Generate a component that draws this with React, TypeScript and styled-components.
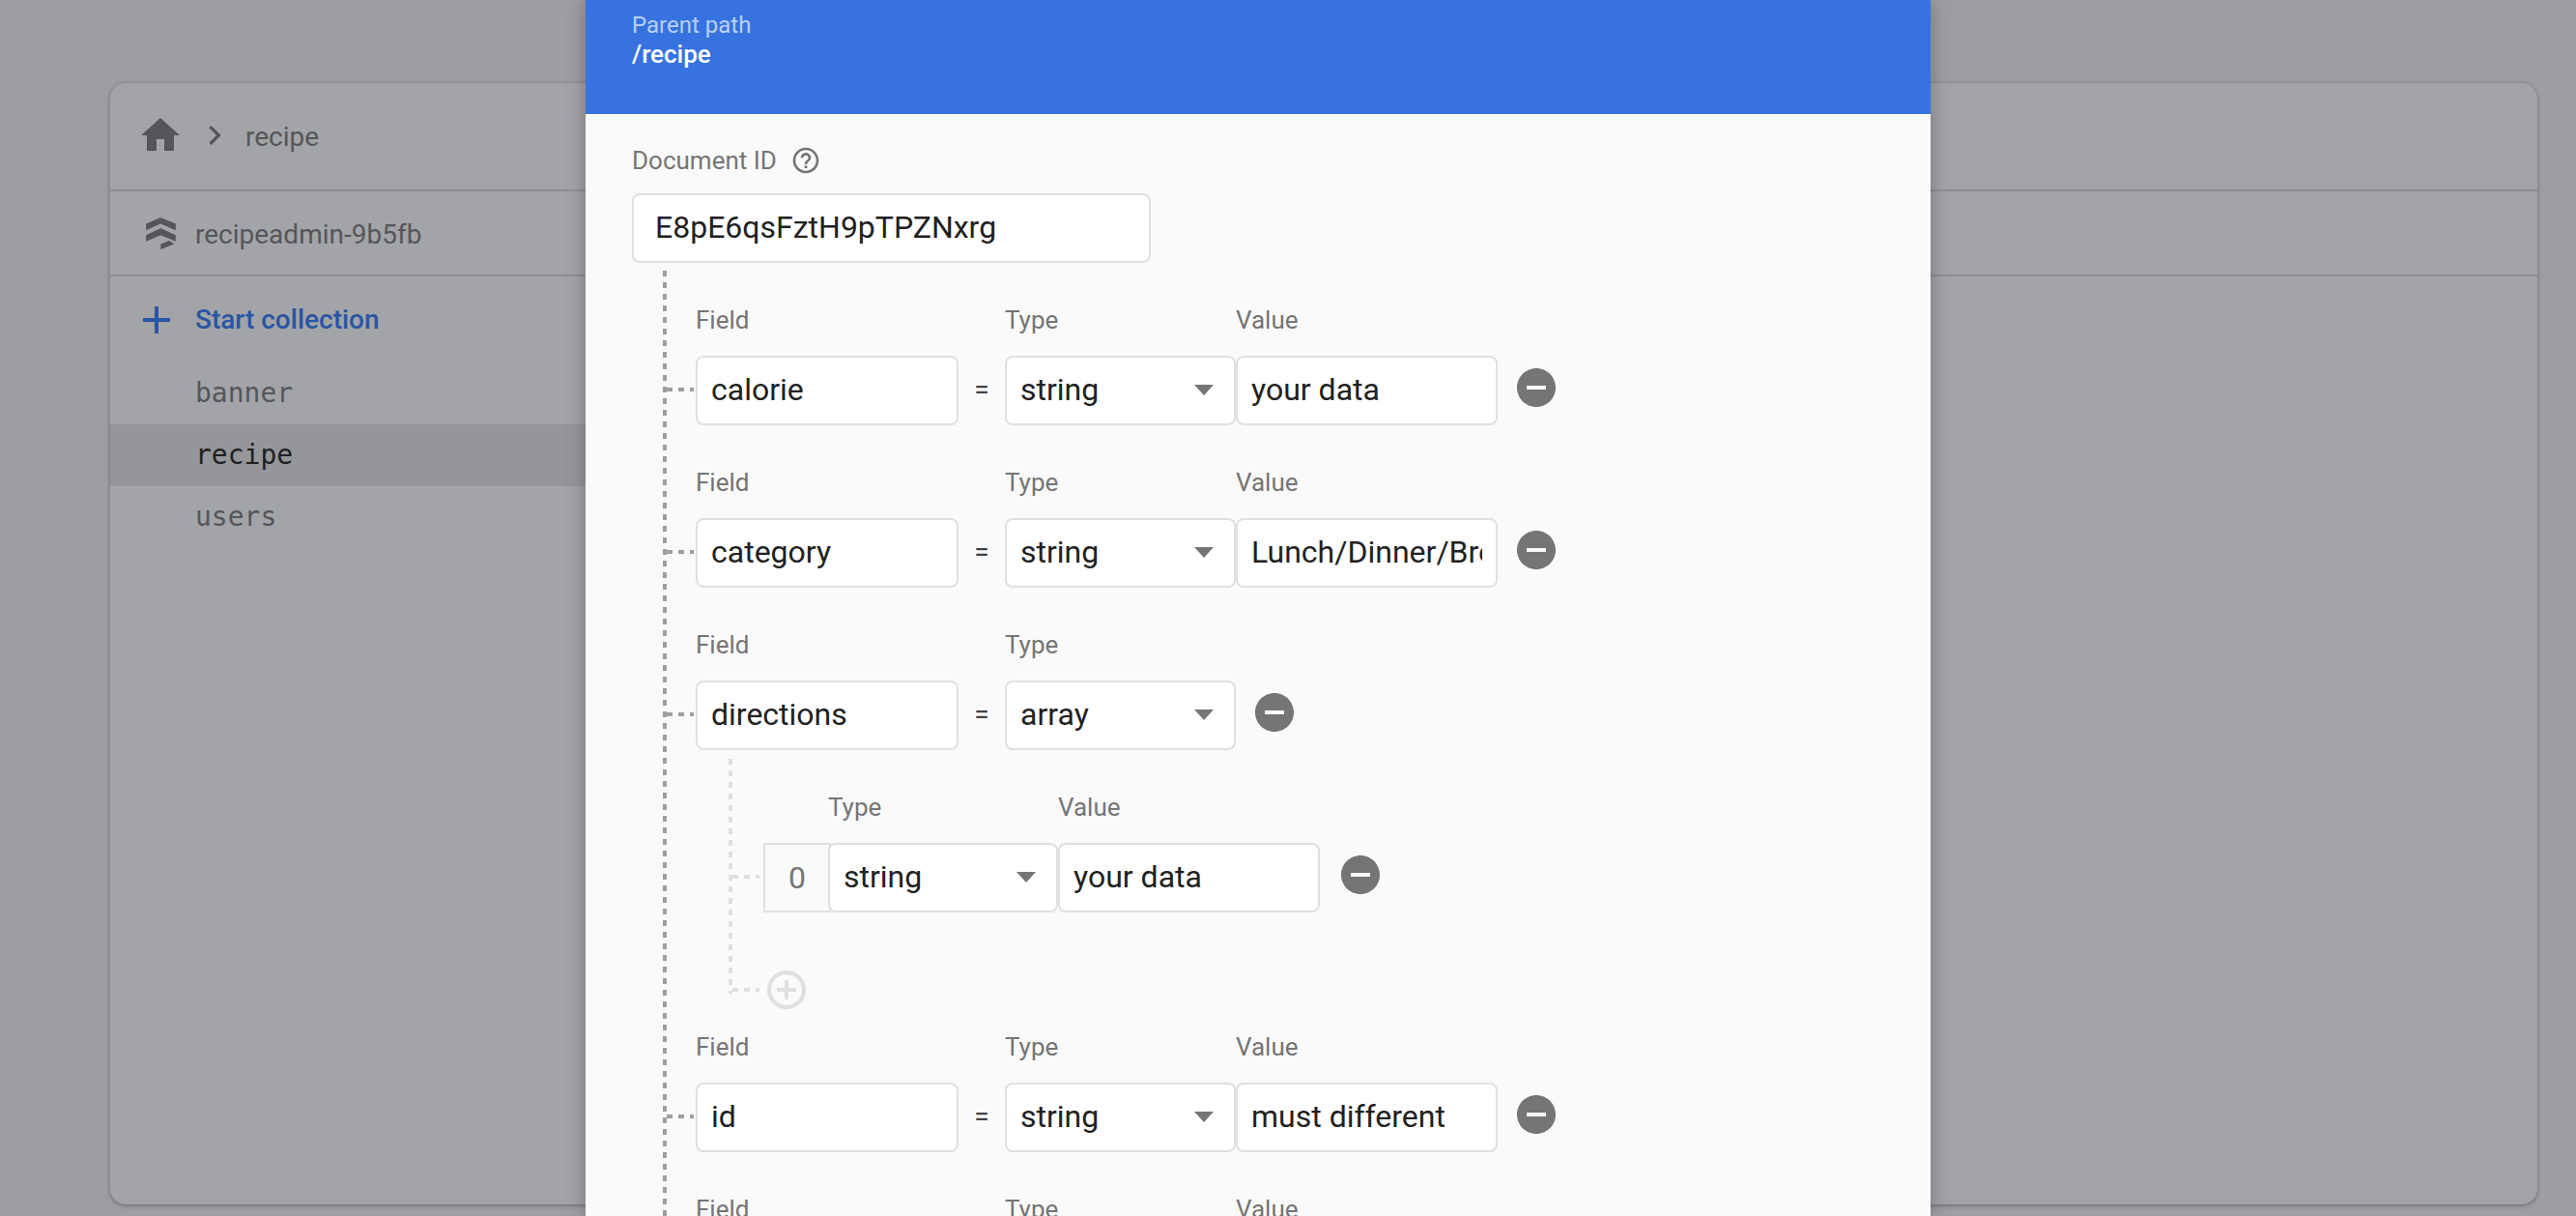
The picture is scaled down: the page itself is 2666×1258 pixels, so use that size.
import React from "react";
import styled, { createGlobalStyle } from "styled-components";

const GlobalStyle = createGlobalStyle`
  html, body {
    margin: 0;
    padding: 0;
    height: 100%;
    overflow: hidden;
    background: #9d9ea2;
  }
  * { box-sizing: border-box; }
`;

// Styled Components
const Page = styled.div`
  position: relative;
  width: 2666px;
  height: 1258px;
  padding: 86px 40px 12px 114px;
  overflow: hidden;
  background: #9d9ea2;
  font-family: Roboto, "Liberation Sans", sans-serif;
`;

const Card = styled.section`
  height: 100%;
  border-radius: 16px;
  background: #a3a4a7;
  box-shadow: 0 1px 4px rgba(60, 60, 65, 0.55);
  display: flex;
  flex-direction: column;
`;

const Breadcrumb = styled.div`
  height: 112px;
  flex: none;
  display: flex;
  align-items: center;
  padding: 0 0 2px 28px;
  border-bottom: 2px solid #8e8f93;
  color: #55565a;
  font-size: 28px;
`;

const CrumbText = styled.span`
  margin: 3px 0 0 12px;
`;

const Chevron = styled.svg`
  margin-left: 12px;
`;

const ProjectRow = styled.div`
  height: 88px;
  flex: none;
  display: flex;
  align-items: center;
  padding-left: 37px;
  border-bottom: 2px solid #8e8f93;
  color: #55565a;
  font-size: 28px;
`;

const ProjectName = styled.span`
  margin: 3px 0 0 20px;
`;

const StartRow = styled.div`
  height: 89px;
  flex: none;
  display: flex;
  align-items: center;
  padding-left: 34px;
  color: #2a55a3;
  font-size: 28px;
  font-weight: 500;
`;

const StartLabel = styled.span`
  margin-left: 26px;
`;

const CollectionItem = styled.div<{ $active?: boolean }>`
  width: 600px;
  height: 64px;
  display: flex;
  align-items: center;
  padding: 0 0 1px 88px;
  font-family: "DejaVu Sans Mono", "Liberation Mono", monospace;
  font-size: 28px;
  color: ${(p) => (p.$active ? "#1f1f21" : "#55565a")};
  background: ${(p) => (p.$active ? "#959699" : "transparent")};
`;

const Modal = styled.div`
  position: absolute;
  top: 0;
  left: 606px;
  width: 1392px;
  height: 100%;
  overflow: hidden;
  background: #fafafa;
  box-shadow: 0 0 18px rgba(60, 60, 65, 0.45);
`;

const ModalHeader = styled.header`
  height: 118px;
  padding: 11px 48px 0;
  background: #3673e0;
  font-size: 24px;
  line-height: 30px;
`;

const ParentLabel = styled.div`
  color: #b9d0f5;
`;

const ParentValue = styled.div`
  color: #fff;
  font-size: 26px;
  font-weight: 500;
`;

const ModalBody = styled.div`
  padding: 30px 48px 0;
`;

const DocLabel = styled.div`
  display: flex;
  align-items: center;
  height: 36px;
  color: #757575;
  font-size: 26px;
`;

const HelpIcon = styled.svg`
  margin-left: 14px;
`;

const Box = styled.div<{ $width: number }>`
  width: ${(p) => p.$width}px;
  height: 72px;
  flex: none;
  display: flex;
  align-items: center;
  padding: 0 14px 2px 14px;
  background: #fff;
  border: 2px solid #e0e0e0;
  border-radius: 8px;
  color: #212121;
  font-size: 32px;
`;

const BoxText = styled.span`
  display: block;
  width: 100%;
  overflow: hidden;
  white-space: nowrap;
`;

const DocInput = styled(Box)`
  margin-top: 16px;
  padding-left: 22px;
`;

const FieldList = styled.div`
  position: relative;
  margin-top: 8px;
  padding: 37px 0 0 66px;

  &::before {
    content: "";
    position: absolute;
    left: 32px;
    top: 0;
    width: 4px;
    height: 1200px;
    background: repeating-linear-gradient(to bottom, #9e9e9e 0 6px, transparent 6px 12px);
  }
`;

const FieldBlock = styled.div`
  margin-bottom: 45px;
`;

const LabelRow = styled.div`
  display: flex;
  height: 28px;
  margin-bottom: 23px;
  color: #757575;
  font-size: 26px;
  line-height: 28px;
`;

const LabelCell = styled.div<{ $width: number }>`
  width: ${(p) => p.$width}px;
  flex: none;
`;

const InputRow = styled.div`
  position: relative;
  display: flex;
  align-items: center;

  &::before {
    content: "";
    position: absolute;
    left: -30px;
    top: 33px;
    width: 28px;
    height: 4px;
    background: repeating-linear-gradient(to right, #9e9e9e 0 6px, transparent 6px 12px);
  }
`;

const NestedRow = styled(InputRow)`
  &::before {
    left: -32px;
    background: repeating-linear-gradient(to right, #e0e0e0 0 6px, transparent 6px 12px);
  }
`;

const Equals = styled.div`
  width: 48px;
  flex: none;
  padding-bottom: 4px;
  text-align: center;
  color: #424242;
  font-size: 28px;
`;

const SelectBox = styled(Box)`
  justify-content: space-between;
  padding-right: 21px;
`;

const Arrow = styled.span`
  width: 0;
  height: 0;
  border-left: 10px solid transparent;
  border-right: 10px solid transparent;
  border-top: 11px solid #757575;
`;

const RemoveIcon = styled.svg<{ $offset: number }>`
  flex: none;
  margin-left: ${(p) => p.$offset}px;
  margin-top: -7px;
`;

const ArrayBlock = styled.div`
  position: relative;
  padding: 45px 0 0 70px;

  &::before {
    content: "";
    position: absolute;
    left: 34px;
    top: 9px;
    width: 4px;
    height: 243px;
    background: repeating-linear-gradient(to bottom, #e0e0e0 0 6px, transparent 6px 12px);
  }
`;

const IndexBox = styled.div`
  width: 70px;
  height: 72px;
  flex: none;
  margin-right: -3px;
  display: flex;
  align-items: center;
  justify-content: center;
  background: #fafafa;
  border: 2px solid #e0e0e0;
  color: #757575;
  font-size: 32px;
`;

const AddRow = styled.div`
  position: relative;
  height: 40px;
  margin-top: 60px;
  margin-bottom: 25px;
  padding-left: 4px;
  display: flex;
  align-items: center;

  &::before {
    content: "";
    position: absolute;
    left: -32px;
    top: 18px;
    width: 28px;
    height: 4px;
    background: repeating-linear-gradient(to right, #e0e0e0 0 6px, transparent 6px 12px);
  }
`;

const AddIcon = styled.svg`
  flex: none;
  margin: -4px;
`;

// Icons
const MINUS = "M12 2C6.48 2 2 6.48 2 12s4.48 10 10 10 10-4.48 10-10S17.52 2 12 2zm5 11H7v-2h10v2z";

const RemoveButton = ({ offset }: { offset: number }) => (
  <RemoveIcon $offset={offset} width="48" height="48" viewBox="0 0 24 24" fill="#757575">
    <path d={MINUS} />
  </RemoveIcon>
);

type Field = {
  name: string;
  type: string;
  value: string;
};

const before: Field[] = [
  { name: "calorie", type: "string", value: "your data" },
  { name: "category", type: "string", value: "Lunch/Dinner/Breakfast" },
];

const after: Field[] = [{ name: "id", type: "string", value: "must different" }];

const TypeSelect = ({ type, width }: { type: string; width: number }) => (
  <SelectBox $width={width}>
    <span>{type}</span>
    <Arrow />
  </SelectBox>
);

const FieldLabels = ({ withValue }: { withValue: boolean }) => (
  <LabelRow>
    <LabelCell $width={320}>Field</LabelCell>
    <LabelCell $width={239}>Type</LabelCell>
    {withValue && <LabelCell $width={271}>Value</LabelCell>}
  </LabelRow>
);

const StringField = ({ field }: { field: Field }) => (
  <FieldBlock>
    <FieldLabels withValue />
    <InputRow>
      <Box $width={272}>
        <BoxText>{field.name}</BoxText>
      </Box>
      <Equals>=</Equals>
      <TypeSelect type={field.type} width={239} />
      <Box $width={271}>
        <BoxText>{field.value}</BoxText>
      </Box>
      <RemoveButton offset={16} />
    </InputRow>
  </FieldBlock>
);

const App = () => {
  return (
    <Page>
      <GlobalStyle />
      <Card>
        <Breadcrumb>
          <svg width="48" height="48" viewBox="0 0 24 24" fill="#55565a">
            <path d="M10 20v-6h4v6h5v-8h3L12 3 2 12h3v8z" />
          </svg>
          <Chevron width="40" height="40" viewBox="0 0 24 24" fill="#55565a">
            <path d="M10 6L8.59 7.41 13.17 12l-4.58 4.59L10 18l6-6z" />
          </Chevron>
          <CrumbText>recipe</CrumbText>
        </Breadcrumb>
        <ProjectRow>
          <svg width="31" height="33" viewBox="0 0 93 100" fill="#55565a">
            <polygon points="0,20 46,0 93,20 93,40 46,20 0,40" />
            <polygon points="0,55 46,33 93,55 93,75 46,55 0,75" />
            <polygon points="46,83 73,73 88,83 46,100" />
          </svg>
          <ProjectName>recipeadmin-9b5fb</ProjectName>
        </ProjectRow>
        <StartRow>
          <svg width="28" height="28" viewBox="0 0 28 28" fill="#2a55a3">
            <path d="M12 0h4v12h12v4H16v12h-4V16H0v-4h12z" />
          </svg>
          <StartLabel>Start collection</StartLabel>
        </StartRow>
        <CollectionItem>banner</CollectionItem>
        <CollectionItem $active>recipe</CollectionItem>
        <CollectionItem>users</CollectionItem>
      </Card>

      <Modal>
        <ModalHeader>
          <ParentLabel>Parent path</ParentLabel>
          <ParentValue>/recipe</ParentValue>
        </ModalHeader>
        <ModalBody>
          <DocLabel>
            Document ID
            <HelpIcon width="32" height="32" viewBox="0 0 24 24" fill="#757575">
              <path d="M11 18h2v-2h-2v2zm1-16C6.48 2 2 6.48 2 12s4.48 10 10 10 10-4.48 10-10S17.52 2 12 2zm0 18c-4.41 0-8-3.59-8-8s3.59-8 8-8 8 3.59 8 8-3.59 8-8 8zm0-14c-2.21 0-4 1.79-4 4h2c0-1.1.9-2 2-2s2 .9 2 2c0 2-3 1.75-3 5h2c0-2.25 3-2.5 3-5 0-2.21-1.79-4-4-4z" />
            </HelpIcon>
          </DocLabel>
          <DocInput $width={537}>
            <BoxText>E8pE6qsFztH9pTPZNxrg</BoxText>
          </DocInput>
          <FieldList>
            {before.map((field) => (
              <StringField key={field.name} field={field} />
            ))}

            <div>
              <FieldLabels withValue={false} />
              <InputRow>
                <Box $width={272}>
                  <BoxText>directions</BoxText>
                </Box>
                <Equals>=</Equals>
                <TypeSelect type="array" width={239} />
                <RemoveButton offset={16} />
              </InputRow>
              <ArrayBlock>
                <LabelRow>
                  <LabelCell $width={67} />
                  <LabelCell $width={238}>Type</LabelCell>
                  <LabelCell $width={271}>Value</LabelCell>
                </LabelRow>
                <NestedRow>
                  <IndexBox>0</IndexBox>
                  <TypeSelect type="string" width={238} />
                  <Box $width={271}>
                    <BoxText>your data</BoxText>
                  </Box>
                  <RemoveButton offset={18} />
                </NestedRow>
                <AddRow>
                  <AddIcon width="48" height="48" viewBox="0 0 24 24" fill="#e0e0e0">
                    <path d="M13 7h-2v4H7v2h4v4h2v-4h4v-2h-4V7zm-1-5C6.48 2 2 6.48 2 12s4.48 10 10 10 10-4.48 10-10S17.52 2 12 2zm0 18c-4.41 0-8-3.59-8-8s3.59-8 8-8 8 3.59 8 8-3.59 8-8 8z" />
                  </AddIcon>
                </AddRow>
              </ArrayBlock>
            </div>

            {after.map((field) => (
              <StringField key={field.name} field={field} />
            ))}
            <FieldLabels withValue />
          </FieldList>
        </ModalBody>
      </Modal>
    </Page>
  );
};

export default App;
